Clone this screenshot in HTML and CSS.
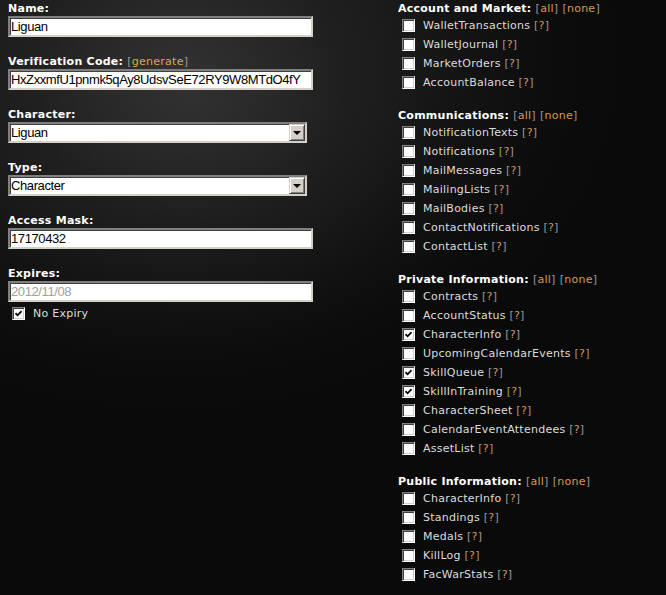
FILE: index.html
```html
<!DOCTYPE html>
<html>
<head>
<meta charset="utf-8">
<link rel="stylesheet" href="styles.css">
</head>
<body>
<div class="page">
  <div class="left">
    <div class="field">
      <div class="label">Name:</div>
      <input class="txt" type="text" value="Liguan">
    </div>
    <div class="field">
      <div class="label">Verification Code: <span class="br">[<a class="lnk">generate</a>]</span></div>
      <input class="txt" type="text" value="HxZxxmfU1pnmk5qAy8UdsvSeE72RY9W8MTdO4fY">
    </div>
    <div class="field">
      <div class="label">Character:</div>
      <div class="sel"><span class="sel-val">Liguan</span><span class="sel-btn"><span class="tri"></span></span></div>
    </div>
    <div class="field">
      <div class="label">Type:</div>
      <div class="sel"><span class="sel-val">Character</span><span class="sel-btn"><span class="tri"></span></span></div>
    </div>
    <div class="field">
      <div class="label">Access Mask:</div>
      <input class="txt" type="text" value="17170432">
    </div>
    <div class="field last">
      <div class="label">Expires:</div>
      <input class="txt dis" type="text" value="2012/11/08" disabled>
      <div class="expiry"><span class="cb on"><svg viewBox="0 0 7 7" width="7" height="7"><path d="M0.5 3.2 L2.6 5.3 L6.5 1.2" fill="none" stroke="#000" stroke-width="1.7"/></svg></span><span>No Expiry</span></div>
    </div>
  </div>

  <div class="right">
    <div class="section">
      <div class="heading">Account and Market: <span class="br">[<a class="lnk">all</a>]</span> <span class="br">[<a class="lnk">none</a>]</span></div>
      <ul class="items">
        <li><span class="cb"></span>WalletTransactions <span class="br">[<a class="lnk">?</a>]</span></li>
        <li><span class="cb"></span>WalletJournal <span class="br">[<a class="lnk">?</a>]</span></li>
        <li><span class="cb"></span>MarketOrders <span class="br">[<a class="lnk">?</a>]</span></li>
        <li><span class="cb"></span>AccountBalance <span class="br">[<a class="lnk">?</a>]</span></li>
      </ul>
    </div>
    <div class="section">
      <div class="heading">Communications: <span class="br">[<a class="lnk">all</a>]</span> <span class="br">[<a class="lnk">none</a>]</span></div>
      <ul class="items">
        <li><span class="cb"></span>NotificationTexts <span class="br">[<a class="lnk">?</a>]</span></li>
        <li><span class="cb"></span>Notifications <span class="br">[<a class="lnk">?</a>]</span></li>
        <li><span class="cb"></span>MailMessages <span class="br">[<a class="lnk">?</a>]</span></li>
        <li><span class="cb"></span>MailingLists <span class="br">[<a class="lnk">?</a>]</span></li>
        <li><span class="cb"></span>MailBodies <span class="br">[<a class="lnk">?</a>]</span></li>
        <li><span class="cb"></span>ContactNotifications <span class="br">[<a class="lnk">?</a>]</span></li>
        <li><span class="cb"></span>ContactList <span class="br">[<a class="lnk">?</a>]</span></li>
      </ul>
    </div>
    <div class="section">
      <div class="heading">Private Information: <span class="br">[<a class="lnk">all</a>]</span> <span class="br">[<a class="lnk">none</a>]</span></div>
      <ul class="items">
        <li><span class="cb"></span>Contracts <span class="br">[<a class="lnk">?</a>]</span></li>
        <li><span class="cb"></span>AccountStatus <span class="br">[<a class="lnk">?</a>]</span></li>
        <li><span class="cb on"><svg viewBox="0 0 7 7" width="7" height="7"><path d="M0.5 3.2 L2.6 5.3 L6.5 1.2" fill="none" stroke="#000" stroke-width="1.7"/></svg></span>CharacterInfo <span class="br">[<a class="lnk">?</a>]</span></li>
        <li><span class="cb"></span>UpcomingCalendarEvents <span class="br">[<a class="lnk">?</a>]</span></li>
        <li><span class="cb on"><svg viewBox="0 0 7 7" width="7" height="7"><path d="M0.5 3.2 L2.6 5.3 L6.5 1.2" fill="none" stroke="#000" stroke-width="1.7"/></svg></span>SkillQueue <span class="br">[<a class="lnk">?</a>]</span></li>
        <li><span class="cb on"><svg viewBox="0 0 7 7" width="7" height="7"><path d="M0.5 3.2 L2.6 5.3 L6.5 1.2" fill="none" stroke="#000" stroke-width="1.7"/></svg></span>SkillInTraining <span class="br">[<a class="lnk">?</a>]</span></li>
        <li><span class="cb"></span>CharacterSheet <span class="br">[<a class="lnk">?</a>]</span></li>
        <li><span class="cb"></span>CalendarEventAttendees <span class="br">[<a class="lnk">?</a>]</span></li>
        <li><span class="cb"></span>AssetList <span class="br">[<a class="lnk">?</a>]</span></li>
      </ul>
    </div>
    <div class="section">
      <div class="heading">Public Information: <span class="br">[<a class="lnk">all</a>]</span> <span class="br">[<a class="lnk">none</a>]</span></div>
      <ul class="items">
        <li><span class="cb"></span>CharacterInfo <span class="br">[<a class="lnk">?</a>]</span></li>
        <li><span class="cb"></span>Standings <span class="br">[<a class="lnk">?</a>]</span></li>
        <li><span class="cb"></span>Medals <span class="br">[<a class="lnk">?</a>]</span></li>
        <li><span class="cb"></span>KillLog <span class="br">[<a class="lnk">?</a>]</span></li>
        <li><span class="cb"></span>FacWarStats <span class="br">[<a class="lnk">?</a>]</span></li>
      </ul>
    </div>
  </div>
</div>
</body>
</html>
```

FILE: styles.css
```css
html, body {
  margin: 0;
  padding: 0;
  height: 100%;
}
body {
  background-color: #0a0a0a;
  background-image:
    radial-gradient(ellipse 260px 230px at 190px 90px, rgba(60,60,60,0.55), rgba(40,40,40,0.25) 60%, rgba(0,0,0,0) 100%),
    radial-gradient(ellipse 460px 360px at 170px 60px, #262626 0%, #1a1a1a 45%, #0c0c0c 85%, #0a0a0a 100%);
  font-family: "DejaVu Sans", Verdana, sans-serif;
  font-size: 11px;
  letter-spacing: 0.25px;
  color: #dcdcdc;
  overflow: hidden;
}
.page {
  display: grid;
  grid-template-columns: 305px 1fr;
  column-gap: 85px;
  padding: 2px 0 0 8px;
}
.label, .heading {
  font-weight: bold;
  color: #fff;
  line-height: 13px;
  height: 13px;
  white-space: nowrap;
}
.label {
  margin-bottom: 1px;
}
.field {
  margin-bottom: 18px;
}
.field.last { margin-bottom: 0; }
.br {
  font-weight: normal;
  color: #9a9a9a;
}
.lnk {
  color: #d8975a;
}
.label .lnk { color: #e0a448; }
.txt {
  display: block;
  box-sizing: border-box;
  width: 305px;
  height: 21px;
  margin: 0;
  padding: 0 1px;
  font-family: "Liberation Sans", Arial, sans-serif;
  font-size: 13px;
  letter-spacing: -0.4px;
  color: #000;
  background: #fff;
  border-style: solid;
  border-width: 2px;
  border-color: #808080 #d4d0c8 #d4d0c8 #808080;
  box-shadow: inset 1px 1px 0 #404040;
  outline: none;
}
.txt.dis {
  color: #a0a0a0;
  -webkit-text-fill-color: #a0a0a0;
  opacity: 1;
}
.sel {
  display: flex;
  align-items: center;
  box-sizing: border-box;
  width: 299px;
  height: 21px;
  background: #fff;
  border-style: solid;
  border-width: 2px;
  border-color: #808080 #d4d0c8 #d4d0c8 #808080;
  box-shadow: inset 1px 1px 0 #404040;
  font-family: "Liberation Sans", Arial, sans-serif;
  font-size: 13px;
  letter-spacing: -0.4px;
  color: #000;
}
.sel-val {
  flex: 1;
  padding-left: 1px;
  line-height: 17px;
}
.sel-btn {
  display: flex;
  align-items: center;
  justify-content: center;
  box-sizing: border-box;
  width: 16px;
  height: 17px;
  background: #d4d0c8;
  border-style: solid;
  border-width: 1px;
  border-color: #d4d0c8 #404040 #404040 #d4d0c8;
  box-shadow: inset 1px 1px 0 #fff, inset -1px -1px 0 #808080;
}
.tri {
  width: 0;
  height: 0;
  border-left: 4px solid transparent;
  border-right: 4px solid transparent;
  border-top: 4px solid #000;
  margin-top: 1px;
}
.cb {
  display: inline-flex;
  align-items: center;
  justify-content: center;
  box-sizing: border-box;
  width: 13px;
  height: 13px;
  background: #fff;
  border-style: solid;
  border-width: 1px;
  border-color: #808080 #fff #fff #808080;
  box-shadow: inset 1px 1px 0 #404040, inset -1px -1px 0 #d4d0c8;
  flex: none;
}
.expiry {
  display: flex;
  align-items: center;
  height: 13px;
  margin-top: 5px;
  padding-left: 4px;
  gap: 8px;
  color: #dcdcdc;
}
.items {
  list-style: none;
  margin: 1px 0 0 0;
  padding: 0 0 0 4px;
}
.items li {
  display: flex;
  align-items: center;
  height: 19px;
  white-space: pre;
}
.items li .cb {
  margin-right: 8px;
}
.section {
  margin-bottom: 17px;
}
```
